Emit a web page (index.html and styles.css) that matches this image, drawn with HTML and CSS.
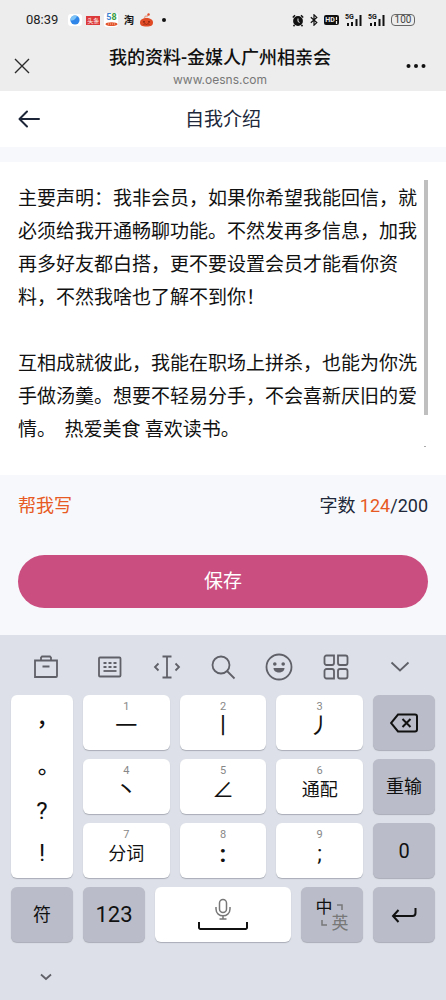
FILE: index.html
```html
<!DOCTYPE html>
<html lang="zh-CN">
<head>
<meta charset="utf-8">
<meta name="viewport" content="width=device-width, initial-scale=1">
<title>我的资料-金媒人广州相亲会</title>
<link rel="stylesheet" href="styles.css">
</head>
<body>
<div class="screen">
  <header class="top">
    <div class="status">
      <time class="clock">08:39</time>
      <div class="apps">
        <span class="app app-white"><svg width="12" height="12" viewBox="0 0 12 12"><circle cx="6" cy="6" r="4.6" fill="#2f86e8"/><path d="M1.500 5C2 1.500 6 .8 8 2 7 5 4.500 7 1.500 6.500Z" fill="#7cc4f8"/></svg></span>
        <span class="app app-news">头条</span>
        <span class="app app-58"><b><i>5</i>8</b><svg width="13" height="5" viewBox="0 0 13 5"><ellipse cx="6.500" cy="2.200" rx="6" ry="1.900" fill="#e2552e"/><path d="M3 2h7" stroke="#ffd9b0" stroke-width=".8" stroke-dasharray="1 1"/></svg></span>
        <span class="app app-tao">淘</span>
        <svg width="15" height="15" viewBox="0 0 15 15"><path d="M5.500 5C6 3 7.500 2.500 8 3.500L9.500 1" fill="none" stroke="#e9a08c" stroke-width="1.200"/><circle cx="9.600" cy="1.500" r="1.200" fill="#e4502c"/><path d="M1 9.500C1 6.500 4 5 7.500 5S14 6.500 14 9.500 12 13.500 7.500 13.500 1 12.500 1 9.500Z" fill="#e04a24"/><circle cx="5" cy="8.800" r=".9" fill="#7c1c0c"/><circle cx="10" cy="8.800" r=".9" fill="#7c1c0c"/><path d="M4.500 11.500l1.500-.8 1.500.8 1.500-.8 1.500.8" fill="none" stroke="#7c1c0c" stroke-width=".7"/></svg>
        <span class="dot"></span>
      </div>
      <div class="system">
        <svg width="12" height="13" viewBox="0 0 12 13"><circle cx="6" cy="7" r="4.900" fill="#111"/><path d="M.8 3.500 3 1.300M11.200 3.500 9 1.300M2.500 11l-1 1.300M9.500 11l1 1.300" stroke="#111" stroke-width="1.500"/><path d="M6 4.500v3l1.600.9" fill="none" stroke="#eee" stroke-width="1"/></svg>
        <svg width="8" height="12" viewBox="0 0 8 12"><path d="M.8 3.200 6.800 8.600 4 11.200V.8l2.800 2.600L.8 8.800" fill="none" stroke="#111" stroke-width="1.200"/></svg>
        <span class="hd">HD<svg width="3" height="7" viewBox="0 0 3 7"><path d="M1.500 0v3M1.500 4v3" stroke="#eee" stroke-width="1.200"/></svg></span>
        <span class="signal"><small>5G</small><svg width="17" height="11" viewBox="0 0 17 11"><path d="M3 11V8M7 11V7M11.500 11V4M15.500 11V0" stroke="#111" stroke-width="2"/></svg></span>
        <span class="signal"><small>5G</small><svg width="17" height="11" viewBox="0 0 17 11"><path d="M3 11V8M7 11V7M11.500 11V4M15.500 11V0" stroke="#111" stroke-width="2"/></svg></span>
        <span class="battery">100</span>
      </div>
    </div>
    <div class="webbar">
      <button class="icon-btn" aria-label="关闭"><svg width="16" height="16" viewBox="0 0 16 16"><path d="M1 1l14 14M15 1 1 15" stroke="#2b2b2b" stroke-width="1.400"/></svg></button>
      <div class="page-name"><h1>我的资料-金媒人广州相亲会</h1><p>www.oesns.com</p></div>
      <button class="icon-btn end" aria-label="更多"><svg width="20" height="6" viewBox="0 0 20 6"><g fill="#111"><circle cx="2.500" cy="3" r="2"/><circle cx="10" cy="3" r="2"/><circle cx="17.500" cy="3" r="2"/></g></svg></button>
    </div>
  </header>

  <nav class="nav">
    <button class="icon-btn" aria-label="返回"><svg width="22" height="18" viewBox="0 0 22 18"><path d="M21 9H2M9 1.500 1.500 9 9 16.500" fill="none" stroke="#1d2638" stroke-width="2" stroke-linecap="round" stroke-linejoin="round"/></svg></button>
    <h2>自我介绍</h2>
  </nav>

  <main class="form">
    <div class="editor">
      <textarea class="intro" aria-label="自我介绍" spellcheck="false">主要声明：我非会员，如果你希望我能回信，就必须给我开通畅聊功能。不然发再多信息，加我再多好友都白搭，更不要设置会员才能看你资料，不然我啥也了解不到你！

互相成就彼此，我能在职场上拼杀，也能为你洗手做汤羹。想要不轻易分手，不会喜新厌旧的爱情。  热爱美食 喜欢读书。</textarea>
      <div class="track"><span class="thumb"></span><span class="grip"></span></div>
    </div>
    <div class="meta"><button class="help">帮我写</button><span>字数 <em>124</em>/200</span></div>
    <button class="save">保存</button>
  </main>

  <section class="keyboard" aria-label="键盘">
    <div class="tools">
      <button aria-label="工具箱"><svg width="26" height="26" viewBox="0 0 26 26"><path d="M2 6.500h22V22a1 1 0 0 1-1 1H2ZM8 6.500V3.500l1-1h8l1 1v3M9.500 12.500h7"/></svg></button>
      <button aria-label="键盘设置"><svg width="26" height="26" viewBox="0 0 26 26"><rect x="2" y="3.500" width="21.500" height="19" rx="1"/><path d="M6.500 9h13M6.500 13h13" stroke-dasharray="3 2"/><path d="M6.500 17h13"/></svg></button>
      <button aria-label="移动光标"><svg width="28" height="26" viewBox="0 0 28 26"><path d="M9.500 2.500h9M9.500 23.500h9M14 2.500v21M5.500 9.500 2 13 5.500 16.500M22.500 9.500 26 13l-3.500 3.500"/></svg></button>
      <button aria-label="搜索"><svg width="26" height="26" viewBox="0 0 26 26"><circle cx="11" cy="11" r="8.500"/><path d="m17 17 7.500 7.500"/></svg></button>
      <button aria-label="表情"><svg width="28" height="28" viewBox="0 0 28 28"><circle cx="14" cy="14" r="12.500"/><g fill="#5f6068" stroke="none"><circle cx="9.800" cy="11" r="1.800"/><circle cx="18.200" cy="11" r="1.800"/><path d="M8.500 15h11c0 6-11 6-11 0Z"/></g></svg></button>
      <button aria-label="更多功能"><svg width="28" height="26" viewBox="0 0 28 26"><path d="M4.500 1.500H12V9a2 2 0 0 1-2 2H4.500a2 2 0 0 1-2-2V3.500a2 2 0 0 1 2-2ZM16 1.500h7.500a2 2 0 0 1 2 2V9a2 2 0 0 1-2 2H18a2 2 0 0 1-2-2ZM4.500 15H10a2 2 0 0 1 2 2v7.500H4.500a2 2 0 0 1-2-2V17a2 2 0 0 1 2-2ZM18 15h5.500a2 2 0 0 1 2 2v5.500a2 2 0 0 1-2 2H18a2 2 0 0 1-2-2V17a2 2 0 0 1 2-2Z"/></svg></button>
      <button aria-label="收起"><svg width="20" height="12" viewBox="0 0 20 12"><path d="m1.500 1.500 8.500 8 8.500-8"/></svg></button>
    </div>
    <div class="pad">
      <div class="puncts"><button>，</button><button>。</button><button class="ascii">?</button><button class="ascii">!</button></div>
      <div class="strokes">
        <button class="key"><small>1</small><span class="stroke">一</span></button>
        <button class="key"><small>2</small><span class="stroke">丨</span></button>
        <button class="key"><small>3</small><span class="stroke">丿</span></button>
        <button class="key"><small>4</small><span class="stroke">丶</span></button>
        <button class="key"><small>5</small><span class="stroke">∠</span></button>
        <button class="key"><small>6</small><span>通配</span></button>
        <button class="key"><small>7</small><span>分词</span></button>
        <button class="key"><small>8</small><span class="mark">:</span></button>
        <button class="key"><small>9</small><span class="stroke">;</span></button>
      </div>
      <div class="side">
        <button class="key dark" aria-label="删除"><svg width="28" height="20" viewBox="0 0 28 20"><path d="M8 1.500h17a2 2 0 0 1 2 2v13a2 2 0 0 1-2 2H8L1 10ZM12.500 6l8 8M20.500 6l-8 8" fill="none" stroke="#111" stroke-width="2"/></svg></button>
        <button class="key dark">重输</button>
        <button class="key dark digit">0</button>
      </div>
    </div>
    <div class="bottom">
      <button class="key dark">符</button>
      <button class="key dark large">123</button>
      <button class="key" aria-label="空格"><svg width="50" height="34" viewBox="0 0 50 34" fill="none"><g stroke="#777" stroke-width="1.500"><rect x="21.500" y="1.500" width="7" height="13" rx="3.500"/><path d="M18 9v2c0 9 14 9 14 0V9M25 18v3M21.500 21h7"/></g><path d="M1 24v5.500a1.500 1.500 0 0 0 1.500 1.500h45a1.500 1.500 0 0 0 1.500-1.500V24" stroke="#111" stroke-width="2"/></svg></button>
      <button class="key dark" aria-label="中英切换"><span class="lang"><span>中</span><svg width="8" height="8" viewBox="0 0 8 8"><path d="M1 2h5v5"/></svg><svg width="8" height="8" viewBox="0 0 8 8"><path d="M2 1v5h5"/></svg><span class="off">英</span></span></button>
      <button class="key dark" aria-label="换行"><svg width="26" height="18" viewBox="0 0 26 18"><path d="M24.500 2v5a3 3 0 0 1-3 3H2M7.500 4 2 10l5.500 6" fill="none" stroke="#111" stroke-width="2"/></svg></button>
    </div>
    <button class="fold" aria-label="隐藏键盘"><svg width="12" height="8" viewBox="0 0 12 8"><path d="m1 1.500 5 4.500 5-4.500"/></svg></button>
  </section>
</div>
</body>
</html>
```
FILE: styles.css
```css
* { box-sizing: border-box; margin: 0; padding: 0; }
body { background: #f7f8fb; color: #111; font-family: Roboto, "Noto Sans CJK SC", sans-serif; }
button { border: 0; background: none; color: inherit; font: inherit; cursor: pointer; }
svg { display: block; flex: none; }
.screen { min-height: 100vh; display: flex; flex-direction: column; }

.top { background: #ededed; padding-bottom: 3px; }
.status { height: 40px; padding: 0 31px 0 26px; display: flex; align-items: center; }
.clock { font-size: 13px; line-height: 20px; color: #222; }
.apps { display: flex; align-items: center; gap: 4px; margin-left: 10px; }
.app { display: flex; align-items: center; justify-content: center; font-family: "Noto Sans CJK SC", sans-serif; }
.app-white { width: 14px; height: 12px; background: #fff; border-radius: 3px; }
.app-news { width: 14px; height: 9px; background: #dc3a3a; color: #fff; font-size: 6px; line-height: 9px; }
.app-58 { width: 14px; height: 14px; flex-direction: column; background: #fff; border-radius: 3px; color: #3a9c3c; }
.app-58 b { font: bold 9px/9px Roboto, sans-serif; }
.app-58 i { font-style: normal; color: #3b7fd0; }
.app-tao { width: 13px; font-size: 10px; font-weight: bold; line-height: 14px; }
.dot { width: 4px; height: 4px; margin-left: 4px; border-radius: 50%; background: #111; }
.system { display: flex; align-items: center; gap: 6px; margin-left: auto; }
.hd { display: flex; align-items: center; justify-content: center; width: 15px; height: 10px; border-radius: 2px; background: #111; color: #eee; font-size: 7px; font-weight: bold; line-height: 10px; }
.signal { position: relative; }
.signal small { position: absolute; left: 0; top: -1px; font-size: 7px; font-weight: bold; line-height: 7px; }
.battery { width: 24px; height: 12px; border: 1px solid #666; border-radius: 4px; font-size: 10px; line-height: 10px; text-align: center; color: #444; }

.webbar { display: grid; grid-template-columns: 60px 1fr 60px; align-items: center; padding: 0 20px 0 14px; }
.icon-btn { display: flex; align-items: center; height: 40px; }
.webbar .icon-btn { padding-top: 3px; }
.end { justify-content: flex-end; }
.page-name { padding-top: 4px; text-align: center; white-space: nowrap; }
.page-name h1 { font-size: 18px; font-weight: 500; line-height: 28px; }
.page-name p { font-size: 12px; line-height: 16px; color: #777; font-family: Inter, sans-serif; }

.nav { background: #fff; display: grid; grid-template-columns: 60px 1fr 60px; align-items: center; height: 56px; padding: 0 18px; }
.nav h2 { padding-top: 2px; font-size: 19px; font-weight: 400; line-height: 28px; text-align: center; color: #20283a; }

.form { flex: 1; padding-top: 15px; }
.editor { display: flex; background: #fff; padding: 18px; }
.intro { flex: 1; min-width: 0; height: 277px; border: 0; outline: 0; resize: none; overflow: hidden; background: none; color: #111; font: 19px/33px "Noto Sans CJK SC", sans-serif; }
.track { width: 4px; display: flex; flex-direction: column; justify-content: space-between; padding-bottom: 10px; }
.thumb { height: 235px; background: #bfbfbf; }
.grip { width: 2px; height: 1px; background: #aaa; }
.meta { display: flex; justify-content: space-between; align-items: center; height: 62px; padding: 0 18px; font-size: 18px; line-height: 28px; color: #20283a; }
.meta em { font-style: normal; color: #e75a24; }
.help { color: #e75a24; }
.save { display: block; width: calc(100% - 36px); height: 53px; margin: 18px 18px 26px; padding-bottom: 4px; border-radius: 27px; background: #cb4e80; color: #fff; font-size: 19px; }

.keyboard { background: #dde0e8; padding: 0 11px 13px; color: #111; }
.tools { display: grid; grid-template-columns: 72px repeat(5, 1fr) 72px; margin: 0 -1px; justify-items: center; align-items: center; height: 60px; padding-top: 4px; }
.tools button { display: flex; }
.tools svg, .fold svg { fill: none; stroke: #5f6068; stroke-width: 1.8; }
.pad { display: grid; grid-template-columns: 62px 1fr 62px; gap: 10px; }
.strokes { display: grid; grid-template-columns: repeat(3, 1fr); gap: 9px 10px; }
.side { display: grid; gap: 9px; }
.puncts { display: grid; padding-bottom: 4px; background: #fff; border-radius: 6px; box-shadow: 0 1px 1px #a9acb6; }
.puncts button { padding-top: 6px; font: 500 22px/30px "Noto Sans CJK TC", sans-serif; }
.puncts .ascii { padding-top: 0; font: 24px/30px Roboto, sans-serif; }
.key { display: flex; flex-direction: column; align-items: center; justify-content: center; height: 55px; border-radius: 6px; background: #fff; box-shadow: 0 1px 1px #a9acb6; font-size: 18px; line-height: 24px; }
.key small { font-size: 11px; line-height: 14px; color: #888; }
.strokes .key { justify-content: flex-start; padding-top: 5px; }
.key .stroke { font-size: 22px; }
.key .mark { font-size: 24px; font-weight: bold; }
.dark { background: #babdc9; }
.digit { font-size: 20px; }
.large { font-size: 22px; }
.bottom { display: grid; grid-template-columns: 62px 62px 1fr 62px 62px; gap: 10px; margin-top: 9px; }
.lang { display: grid; grid-template-columns: 16px 16px; place-items: center; font-size: 17px; line-height: 16px; }
.lang svg { fill: none; stroke: #777; stroke-width: 1.5; }
.off { color: #777; }
.fold { display: flex; margin: 25px 0 0 23px; padding: 6px; }
```
